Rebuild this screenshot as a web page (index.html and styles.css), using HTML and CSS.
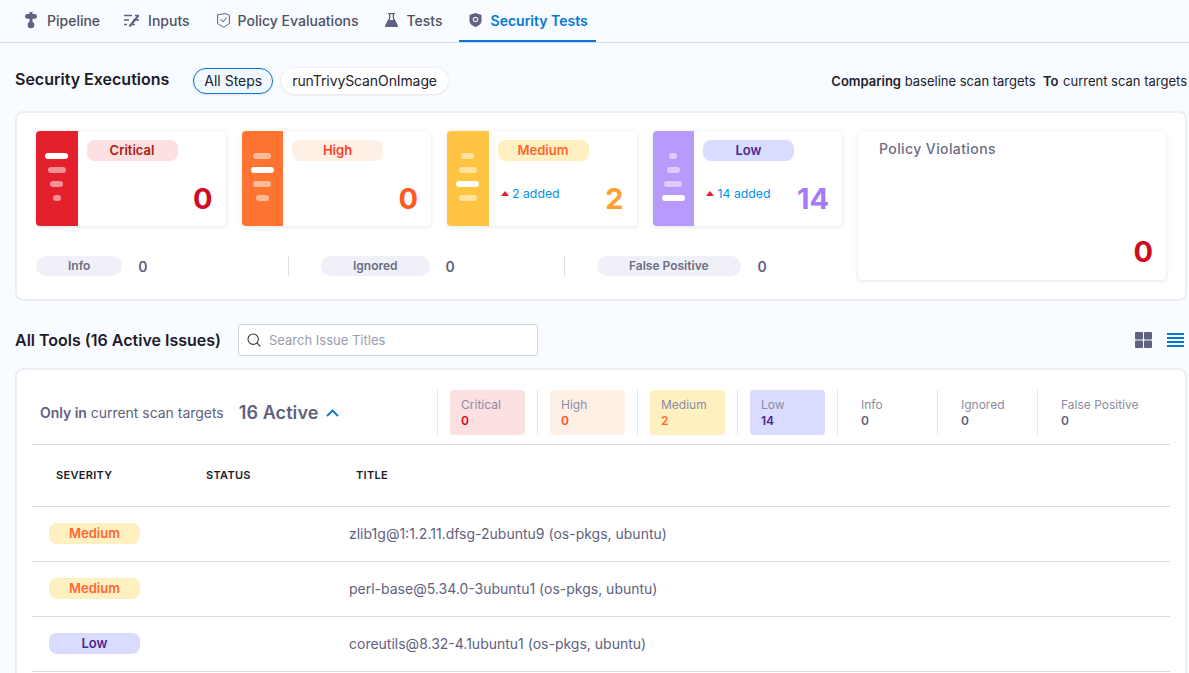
FILE: index.html
```html
<!DOCTYPE html>
<html lang="en">
<head>
    <meta charset="UTF-8">
    <meta name="viewport" content="width=device-width, initial-scale=1.0">
    <title>Security Tests</title>
    <link rel="stylesheet" href="styles.css">
</head>
<body>
    <!-- Tabs -->
    <div class="tabs">
        <a class="tab">
            <svg class="tab-icon" width="12" height="17" viewBox="0 0 12 17" fill="#5f6180"><rect x="4.500" y="0" width="3" height="3"/><rect x="0" y="2" width="12" height="4.800" rx="2.400"/><rect x="4.500" y="6" width="3" height="6"/><circle cx="6" cy="13" r="3.300"/></svg>
            Pipeline
        </a>
        <a class="tab">
            <svg class="tab-icon tab-icon-inputs" width="16" height="14" viewBox="0 0 16 14" fill="none" stroke="#5f6180" stroke-width="1.500"><path d="M0 2.500h8M0 7h5M0 11.500h3M11 2.500h4M9 7h6M8 11.500h3"/><path d="M4.500 13l9-11 1.700 1.300L6.500 14z" fill="#5f6180" stroke="none"/></svg>
            Inputs
        </a>
        <a class="tab">
            <svg class="tab-icon tab-icon-policy" width="13" height="15" viewBox="0 0 13 15" fill="none" stroke="#5f6180" stroke-width="1"><path d="M.6 1.800 8.500.6l3.900 1.600v8.300L6.600 14.300.6 10.600z"/><path d="M3.500 6l2.700 3 3.400-4.500"/></svg>
            Policy Evaluations
        </a>
        <a class="tab">
            <svg class="tab-icon tab-icon-tests" width="13" height="14" viewBox="0 0 13 14" fill="#5f6180"><path d="M3 0h7v1.300H9v3.600l3.800 7.400a1.100 1.100 0 0 1-1 1.700H1.200a1.100 1.100 0 0 1-1-1.700L4 4.900V1.300H3z"/><path d="M5.300 1.300h2.400v4l.8 1.700H4.500l.8-1.700z" fill="#f8fbff"/></svg>
            Tests
        </a>
        <a class="tab active">
            <svg class="tab-icon" width="13" height="14" viewBox="0 0 13 14"><path d="M6.500 0 12.500 2v5.800c0 2.900-2.600 4.900-6 6.200-3.400-1.300-6-3.300-6-6.200V2z" fill="#5f6180"/><circle cx="6.500" cy="6.500" r="2.200" fill="none" stroke="#e6e7ef" stroke-width="1.200"/></svg>
            Security Tests
        </a>
    </div>

    <div class="page">
        <!-- Security Executions -->
        <div class="section-head">
            <h2>Security Executions</h2>
            <span class="chip chip-selected">All Steps</span>
            <span class="chip">runTrivyScanOnImage</span>
            <p class="comparing"><b>Comparing</b> baseline scan targets &nbsp;<b class="to">To</b> current scan targets</p>
        </div>

        <div class="panel summary">
            <div class="summary-left">
                <div class="cards">
                    <div class="card">
                        <div class="strip strip-critical">
                            <i class="bar-23 on"></i><i class="bar-18"></i><i class="bar-13"></i><i class="bar-8"></i>
                        </div>
                        <div class="card-body">
                            <span class="pill pill-critical">Critical</span>
                            <div class="card-foot">
                                <span class="count count-critical">0</span>
                            </div>
                        </div>
                    </div>
                    <div class="card">
                        <div class="strip strip-high">
                            <i class="bar-18"></i><i class="bar-23 on"></i><i class="bar-18"></i><i class="bar-13"></i>
                        </div>
                        <div class="card-body">
                            <span class="pill pill-high">High</span>
                            <div class="card-foot">
                                <span class="count count-high">0</span>
                            </div>
                        </div>
                    </div>
                    <div class="card">
                        <div class="strip strip-medium">
                            <i class="bar-13"></i><i class="bar-18"></i><i class="bar-23 on"></i><i class="bar-18"></i>
                        </div>
                        <div class="card-body">
                            <span class="pill pill-medium">Medium</span>
                            <div class="card-foot">
                                <span class="added"><i class="arrow"></i>2 added</span>
                                <span class="count count-medium">2</span>
                            </div>
                        </div>
                    </div>
                    <div class="card">
                        <div class="strip strip-low">
                            <i class="bar-8"></i><i class="bar-13"></i><i class="bar-18"></i><i class="bar-23 on"></i>
                        </div>
                        <div class="card-body">
                            <span class="pill pill-low">Low</span>
                            <div class="card-foot">
                                <span class="added"><i class="arrow"></i>14 added</span>
                                <span class="count count-low">14</span>
                            </div>
                        </div>
                    </div>
                </div>
                <div class="others">
                    <div class="other other-info"><span class="grey-pill">Info</span><b>0</b></div>
                    <div class="other other-ignored"><span class="grey-pill">Ignored</span><b>0</b></div>
                    <div class="other other-false"><span class="grey-pill">False Positive</span><b>0</b></div>
                </div>
            </div>
            <div class="policy">
                <div class="policy-title">Policy Violations</div>
                <div class="policy-count">0</div>
            </div>
        </div>

        <!-- All Tools -->
        <div class="tools-head">
            <h2>All Tools (16 Active Issues)</h2>
            <label class="search">
                <svg width="14" height="14" viewBox="0 0 14 14" fill="none" stroke="#383946" stroke-width="1.100"><circle cx="6.200" cy="6.200" r="5.200"/><path d="M10 10l3.400 3.400"/></svg>
                <input type="text" placeholder="Search Issue Titles">
            </label>
            <div class="views">
                <svg width="17" height="16" viewBox="0 0 17 16" fill="#5f6180"><rect width="8" height="7.500" rx="1"/><rect x="9" width="8" height="7.500" rx="1"/><rect y="8.500" width="8" height="7.500" rx="1"/><rect x="9" y="8.500" width="8" height="7.500" rx="1"/></svg>
                <svg width="17" height="16" viewBox="0 0 17 16" fill="#0278d5"><rect y="1" width="17" height="2"/><rect y="5" width="17" height="2"/><rect y="9" width="17" height="2"/><rect y="13" width="17" height="2"/></svg>
            </div>
        </div>

        <div class="panel issues">
            <div class="issues-bar">
                <div class="issues-total">
                    <span class="only"><b>Only in</b> current scan targets</span>
                    <span class="active-count">16 Active</span>
                    <svg width="13" height="8" viewBox="0 0 13 8" fill="none" stroke="#0278d5" stroke-width="1.800"><path d="M1 7l5.500-5.500L12 7"/></svg>
                </div>
                <div class="stat"><div class="tile tile-critical">Critical<b>0</b></div></div>
                <div class="stat"><div class="tile tile-high">High<b>0</b></div></div>
                <div class="stat"><div class="tile tile-medium">Medium<b>2</b></div></div>
                <div class="stat"><div class="tile tile-low">Low<b>14</b></div></div>
                <div class="stat"><div class="tile">Info<b>0</b></div></div>
                <div class="stat"><div class="tile">Ignored<b>0</b></div></div>
                <div class="stat"><div class="tile">False Positive<b>0</b></div></div>
            </div>

            <div class="table-head">
                <span>Severity</span>
                <span>Status</span>
                <span>Title</span>
            </div>
            <div class="table-row">
                <span class="pill pill-medium">Medium</span>
                <span class="issue-title">zlib1g@1:1.2.11.dfsg-2ubuntu9 (os-pkgs, ubuntu)</span>
            </div>
            <div class="table-row">
                <span class="pill pill-medium">Medium</span>
                <span class="issue-title">perl-base@5.34.0-3ubuntu1 (os-pkgs, ubuntu)</span>
            </div>
            <div class="table-row">
                <span class="pill pill-low">Low</span>
                <span class="issue-title">coreutils@8.32-4.1ubuntu1 (os-pkgs, ubuntu)</span>
            </div>
        </div>
    </div>
</body>
</html>
```

FILE: styles.css
```css
* {
    box-sizing: border-box;
}
html, body {
    height: 100%;
}
body {
    font-family: 'Inter', 'Liberation Sans', sans-serif;
    margin: 0;
    padding: 0;
    background-color: #f8fbff;
    color: #22222a;
    overflow: hidden;
}
h2 {
    margin: 0;
    font-size: 16px;
    font-weight: 600;
    color: #1c1c28;
}

/* tabs */
.tabs {
    display: flex;
    height: 43px;
    border-bottom: 1px solid #d9dae5;
    padding-left: 15px;
}
.tab {
    display: flex;
    align-items: center;
    height: 42px;
    padding: 0 10px;
    margin-right: 4px;
    font-size: 14px;
    font-weight: 500;
    color: #4f5162;
    white-space: nowrap;
    border-bottom: 2px solid transparent;
}
.tab-icon {
    margin-right: 10px;
    flex: none;
}
.tab-icon-inputs {
    margin-right: 8px;
}
.tab-icon-policy {
    margin: 0 8px 0 3px;
}
.tab-icon-tests {
    margin: 0 9px 0 2px;
}
.tab.active {
    margin-left: 2px;
    width: 137px;
    padding: 0 0 0 10px;
    color: #0278d5;
    font-weight: 600;
    border-bottom-color: #0278d5;
}
.tab.active .tab-icon {
    margin-right: 9px;
}

/* shared */
.page {
    padding: 0 2px 0 15px;
}
.panel {
    background-color: #fff;
    border: 2px solid #eceef3;
    border-radius: 8px;
}
.pill {
    display: flex;
    align-items: center;
    justify-content: center;
    width: 91px;
    height: 21px;
    padding-bottom: 1px;
    border-radius: 8px;
    font-size: 13px;
    font-weight: 600;
}
.pill-critical { background-color: #fce0e2; color: #b41710; }
.pill-high { background-color: #fff0e6; color: #ff3d27; }
.pill-medium { background-color: #fff0c1; color: #ff6730; }
.pill-low { background-color: #d9dcff; color: #4d278f; }

/* security executions */
.section-head {
    display: flex;
    align-items: center;
    height: 26px;
    margin-top: 25px;
}
.section-head h2 {
    padding-bottom: 4px;
}
.chip {
    height: 26px;
    line-height: 24px;
    padding: 0 10px;
    margin-right: 8px;
    border: 1px solid #fff;
    border-radius: 14px;
    background-color: #fff;
    font-size: 14px;
    letter-spacing: -0.1px;
    color: #22222a;
    box-shadow: 0 0 3px rgba(40, 41, 61, 0.06), 0 1px 3px rgba(96, 97, 112, 0.1);
}
.chip-selected {
    margin-left: 24px;
    letter-spacing: 0;
    background-color: #eff9ff;
    border-color: #0278d5;
}
.comparing {
    margin: 0 0 0 auto;
    font-size: 13px;
    color: #22222a;
}
.comparing b {
    font-weight: 600;
}
.comparing .to {
    margin-right: 1px;
}
.summary {
    display: flex;
    height: 190px;
    margin-top: 17px;
    padding: 18px 19px 0 19px;
}
.summary-left {
    width: 806px;
}
.cards {
    display: flex;
    gap: 16px;
}
.card {
    display: flex;
    flex: 1;
    height: 95px;
    background-color: #fff;
    border-radius: 4px;
    overflow: hidden;
    box-shadow: 0 0 1px rgba(40, 41, 61, 0.08), 0 1px 4px rgba(96, 97, 112, 0.16);
}
.strip {
    display: flex;
    flex-direction: column;
    align-items: center;
    gap: 8px;
    width: 41.5px;
    padding-top: 22px;
    flex: none;
}
.strip i {
    display: block;
    height: 6px;
    border-radius: 3px;
    background-color: #fff;
    opacity: 0.5;
}
.strip i.on {
    opacity: 1;
}
.bar-23 { width: 23px; }
.bar-18 { width: 18px; }
.bar-13 { width: 13px; }
.bar-8 { width: 8px; }
.strip-critical { background-color: #e3202b; }
.strip-high { background-color: #ff7433; }
.strip-medium { background-color: #ffc542; }
.strip-low { background-color: #b899fc; }
.card-body {
    flex: 1;
    padding: 9px 13px 0 9px;
}
.card-foot {
    display: flex;
    align-items: flex-start;
    margin-top: 22px;
}
.count {
    margin-left: auto;
    font-size: 29px;
    line-height: 32px;
    font-weight: 700;
}
.count-critical { color: #cf0c1f; }
.count-high { color: #ff5a1f; }
.count-medium { color: #ff9f2e; }
.count-low { color: #a57bf7; }
.added {
    display: flex;
    align-items: center;
    margin: 3px 0 0 3px;
    font-size: 12.3px;
    color: #0092e4;
}
.arrow {
    width: 0;
    height: 0;
    margin-right: 3.5px;
    border-left: 4px solid transparent;
    border-right: 4px solid transparent;
    border-bottom: 5px solid #e3202b;
}
.others {
    display: flex;
    margin-top: 30px;
}
.other {
    display: flex;
    align-items: center;
    height: 20px;
}
.other b {
    margin-left: 16px;
    font-size: 14px;
    font-weight: 600;
    color: #5f6180;
}
.other-info { width: 253px; border-right: 1px solid #d9dae5; }
.other-ignored { width: 276px; padding-left: 32px; border-right: 1px solid #d9dae5; }
.other-false { padding-left: 32px; }
.other-false b { margin-left: 17px; }
.grey-pill {
    height: 20px;
    line-height: 20px;
    padding: 0 32px;
    border-radius: 10px;
    background-color: #f0f1f8;
    font-size: 12px;
    font-weight: 600;
    color: #6b6d85;
}
.policy {
    display: flex;
    flex-direction: column;
    width: 308px;
    height: 149px;
    margin-left: 16px;
    padding: 9px 13px 0 21px;
    border-radius: 4px;
    box-shadow: 0 0 1px rgba(40, 41, 61, 0.08), 0 1px 4px rgba(96, 97, 112, 0.16);
}
.policy-title {
    font-size: 14px;
    font-weight: 500;
    letter-spacing: 0.4px;
    color: #6b6d85;
}
.policy-count {
    margin-top: auto;
    margin-bottom: 12px;
    text-align: right;
    font-size: 29px;
    line-height: 32px;
    font-weight: 700;
    color: #cf0c1f;
}

/* all tools */
.tools-head {
    display: flex;
    align-items: center;
    height: 32px;
    margin-top: 23px;
}
.search {
    display: flex;
    align-items: center;
    width: 300px;
    height: 32px;
    margin-left: 17px;
    padding-left: 8px;
    background-color: #fff;
    border: 1px solid #d0d2de;
    border-radius: 4px;
}
.search input {
    flex: 1;
    min-width: 0;
    margin-left: 8px;
    border: none;
    outline: none;
    padding: 0;
    background: none;
    font-family: inherit;
    font-size: 13px;
}
.search input::placeholder {
    color: #9a9db0;
}
.views {
    display: flex;
    gap: 15px;
    margin-left: auto;
    padding-right: 3px;
}
.views svg {
    display: block;
}
.issues {
    height: 320px;
    margin-top: 12px;
    padding: 0 15px;
}
.issues-bar {
    display: flex;
    height: 75px;
    padding-top: 20px;
    border-bottom: 1px solid #d9dae5;
}
.issues-total {
    display: flex;
    align-items: center;
    width: 405px;
    height: 45px;
    padding-left: 8px;
    flex: none;
}
.only {
    font-size: 14px;
    letter-spacing: -0.03px;
    color: #5f6180;
}
.only b {
    font-weight: 600;
}
.active-count {
    margin: 0 7px 0 15px;
    font-size: 18px;
    letter-spacing: 0.1px;
    font-weight: 600;
    color: #5f6180;
}
.stat {
    width: 100px;
    height: 45px;
    padding: 0 12px;
    border-left: 1px solid #e4e5ec;
    flex: none;
}
.tile {
    width: 75px;
    height: 45px;
    padding: 7px 0 0 11px;
    border-radius: 4px;
    font-size: 12px;
    line-height: 15px;
    color: #8a8ca3;
    white-space: nowrap;
}
.tile b {
    display: block;
    margin-top: 1px;
    line-height: 16px;
    font-weight: 600;
    color: #5f6180;
}
.tile-critical { background-color: #fce0e2; }
.tile-critical b { color: #cf0c1f; }
.tile-high { background-color: #fff0e6; }
.tile-high b { color: #ff4d27; }
.tile-medium { background-color: #fff0c1; }
.tile-medium b { color: #ff6730; }
.tile-low { background-color: #d9dcff; }
.tile-low b { color: #4d278f; }

/* table */
.table-head {
    display: flex;
    align-items: center;
    height: 62px;
    padding: 0 0 2px 24px;
    border-bottom: 1px solid #d9dae5;
}
.table-head span {
    width: 150px;
    font-size: 11px;
    font-weight: 600;
    letter-spacing: 0.3px;
    text-transform: uppercase;
    color: #1c1c28;
}
.table-row {
    display: flex;
    align-items: center;
    height: 55px;
    padding: 0 0 1px 17px;
    border-bottom: 1px solid #d9dae5;
}
.table-row .pill {
    flex: none;
}
.issue-title {
    margin-left: 209px;
    font-size: 14px;
    color: #5f6180;
}
```
